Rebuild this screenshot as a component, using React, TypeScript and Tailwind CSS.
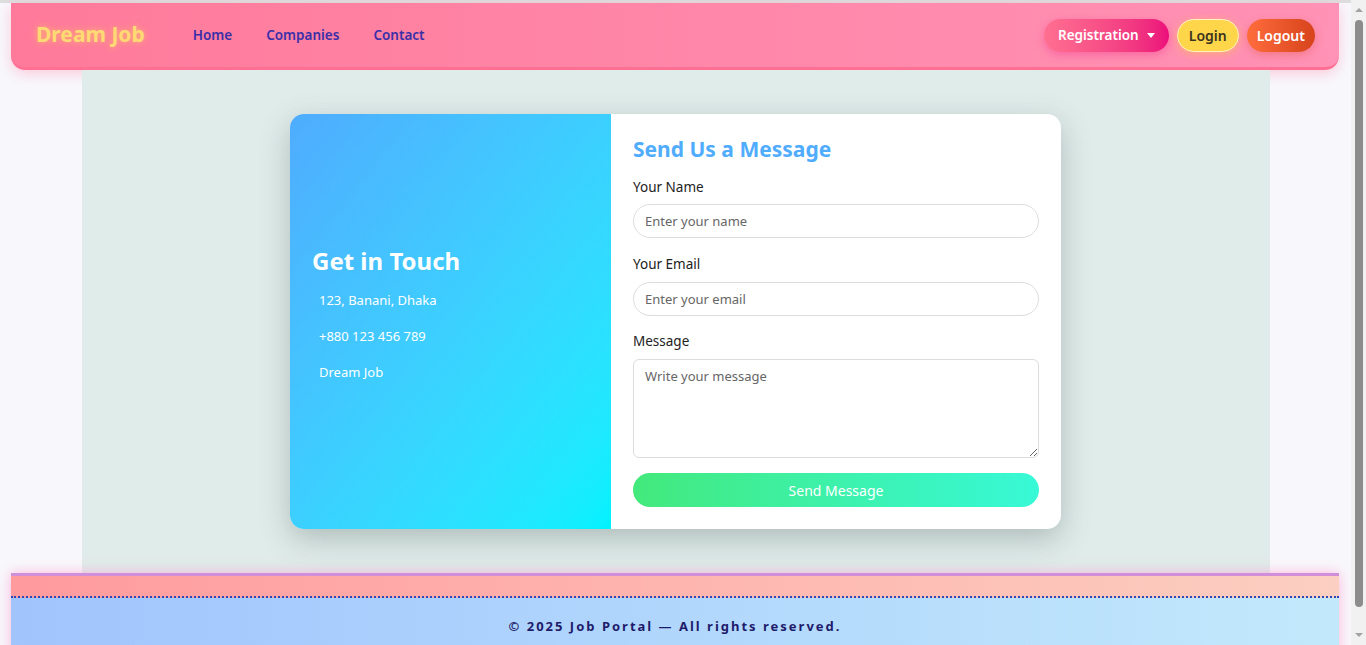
import React from 'react';

const font = { fontFamily: '"Noto Sans", "Open Sans", sans-serif' };

const Navbar = () => (
  <nav className="mx-[11px] mr-[12px] h-[67px] flex items-center justify-between px-[25px] pr-[24px] rounded-b-[14px] bg-gradient-to-r from-[#ff7a9a] to-[#ff92b6] border-b-[3px] border-[#ff6f94] shadow-[0_4px_14px_rgba(255,120,160,0.35)]">
    <div className="flex items-center">
      <span className="text-[21px] font-bold text-[#ffd974] [text-shadow:0_0_6px_rgba(255,210,90,0.7)] mr-[48px]">Dream Job</span>
      <div className="flex items-center gap-[34px] text-[13.5px] font-semibold text-[#3b2fa8]">
        <a href="#">Home</a>
        <a href="#">Companies</a>
        <a href="#">Contact</a>
      </div>
    </div>
    <div className="flex items-center gap-[8px]">
      <button className="h-[33px] px-[14px] rounded-full bg-gradient-to-r from-[#ff6f91] to-[#ec0c7b] text-white text-[13.5px] font-semibold flex items-center gap-[8px] shadow-[0_3px_8px_rgba(236,12,123,0.3)]">
        Registration
        <span className="w-0 h-0 border-l-[4px] border-r-[4px] border-t-[5px] border-l-transparent border-r-transparent border-t-white" />
      </button>
      <button className="h-[33px] px-[11px] rounded-full bg-[#ffd54a] border border-[#fff3c4] text-[#3a3320] text-[14px] font-semibold shadow-[0_2px_8px_rgba(255,200,60,0.5)]">
        Login
      </button>
      <button className="h-[33px] px-[10px] rounded-full bg-gradient-to-r from-[#ff6c3c] to-[#d7431b] text-white text-[14px] font-semibold shadow-[0_3px_8px_rgba(215,67,27,0.3)]">
        Logout
      </button>
    </div>
  </nav>
);

const ContactCard = () => (
  <div className="w-[771px] mx-auto flex rounded-[14px] overflow-hidden bg-white shadow-[0_10px_30px_rgba(60,80,75,0.3)]">
    <div className="w-[321px] bg-gradient-to-br from-[#4facfe] to-[#00f2fe] flex flex-col justify-center px-[22px] pb-[15px] text-white">
      <h2 className="text-[24px] font-bold leading-[30px] mb-[14px]">Get in Touch</h2>
      <ul className="pl-[7px] text-[13px] flex flex-col gap-[16px] leading-[20px]">
        <li>123, Banani, Dhaka</li>
        <li>+880 123 456 789</li>
        <li>Dream Job</li>
      </ul>
    </div>
    <div className="flex-1 p-[22px] pt-[20px]">
      <h3 className="text-[21px] font-bold text-[#4facfe] leading-[30px] mb-[13px]">Send Us a Message</h3>
      <label className="block text-[13.5px] text-[#222] leading-[20px] mb-[7px]">Your Name</label>
      <input placeholder="Enter your name" className="w-full h-[34px] rounded-full border border-[#ddd] px-[11px] text-[13px] placeholder:text-[#666] outline-none mb-[16px]" />
      <label className="block text-[13.5px] text-[#222] leading-[20px] mb-[8px]">Your Email</label>
      <input placeholder="Enter your email" className="w-full h-[34px] rounded-full border border-[#ddd] px-[11px] text-[13px] placeholder:text-[#666] outline-none mb-[15px]" />
      <label className="block text-[13.5px] text-[#222] leading-[20px] mb-[8px]">Message</label>
      <textarea placeholder="Write your message" className="block w-full h-[99px] rounded-[6px] border border-[#ddd] px-[11px] py-[7px] text-[13px] placeholder:text-[#666] outline-none mb-[15px]" />
      <button className="w-full h-[34px] rounded-full bg-gradient-to-r from-[#43e97b] to-[#38f9d7] text-white text-[14px]">Send Message</button>
    </div>
  </div>
);

const Footer = () => (
  <footer className="mx-[11px] mr-[12px] border-t-[3px] border-[#d18fd9] shadow-[0_0_12px_rgba(255,140,200,0.6)]">
    <div className="h-[22px] bg-gradient-to-r from-[#ff9a9e] to-[#fbcfc1] border-b-2 border-dotted border-[#2c49b8]" />
    <div className="h-[90px] bg-gradient-to-r from-[#a1c4fd] to-[#c2e9fb] pt-[19px] text-center">
      <p className="text-[13px] font-bold tracking-[2px] text-[#1e1b6b]">© 2025 Job Portal — All rights reserved.</p>
    </div>
  </footer>
);

// browser scrollbar as seen in the screenshot
const Scrollbar = () => (
  <div className="fixed top-0 right-0 w-[15px] h-full bg-[#f1f1f1] flex flex-col items-center">
    <span className="mt-[8px] w-0 h-0 border-l-[4px] border-r-[4px] border-b-[4px] border-l-transparent border-r-transparent border-b-[#a3a3a3]" />
    <div className="mt-[8px] w-[8px] h-[587px] rounded-full bg-[#8c8c8c]" />
    <span className="mt-auto mb-[8px] w-0 h-0 border-l-[4px] border-r-[4px] border-t-[4px] border-l-transparent border-r-transparent border-t-[#a3a3a3]" />
  </div>
);

export default function App() {
  return (
    <div className="min-h-screen bg-[#f8f8fc] border-t-[3px] border-[#dedede]" style={font}>
      <div className="w-[1351px]">
        <Navbar />
        <main className="w-[1188px] mx-auto bg-[#e0ecea] pt-[44px] pb-[44px]">
          <ContactCard />
        </main>
        <Footer />
      </div>
      <Scrollbar />
    </div>
  );
}
